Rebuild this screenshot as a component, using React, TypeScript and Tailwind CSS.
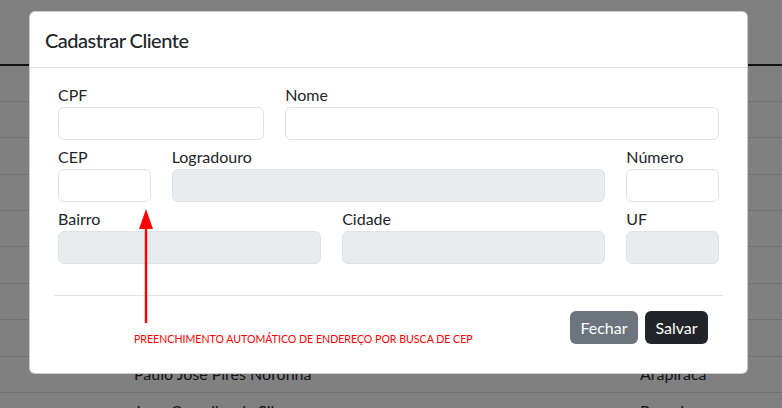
import React from 'react'

// linhas cobertas pelo modal ficam vazias
const rows = [
  { nome: '', cidade: '' },
  { nome: '', cidade: '' },
  { nome: '', cidade: '' },
  { nome: '', cidade: '' },
  { nome: '', cidade: '' },
  { nome: '', cidade: '' },
  { nome: '', cidade: '' },
  { nome: '', cidade: '' },
  { nome: 'Paulo José Pires Noronha', cidade: 'Arapiraca' },
  { nome: 'Joao Carvalho da Silva', cidade: 'Penedo' },
]

function Field({ label, span, disabled }: { label: string; span: string; disabled?: boolean }) {
  return (
    <div className={span}>
      <label className="mb-[2px] block text-base leading-5 text-[#212529]">{label}</label>
      <div
        className={
          'h-[33px] w-full rounded-[6px] border border-[#dee2e6] ' +
          (disabled ? 'bg-[#e9ecef]' : 'bg-white')
        }
      />
    </div>
  )
}

export default function App() {
  return (
    <div className="relative h-[408px] w-[782px] overflow-hidden bg-[#808080] font-['Lato',sans-serif]">
      {/* tabela atrás do modal */}
      <div className="h-[64px]" />
      <div className="h-[1.5px] bg-[#111]" />
      {rows.map((r, i) => (
        <div
          key={i}
          className="flex h-[36.4px] items-center border-b border-[#6f7173] text-base text-[#111315]"
        >
          <div className="w-[640px] pl-[134px]">{r.nome}</div>
          <div>{r.cidade}</div>
        </div>
      ))}

      {/* modal */}
      <div className="absolute left-[29px] top-[11px] w-[719px] rounded-[6px] border border-black/20 bg-white">
        <div className="flex h-[56px] items-center border-b border-[#dee2e6] px-[15px]">
          <h5 className="text-[20px] font-medium tracking-[-0.5px] text-[#212529]">Cadastrar Cliente</h5>
        </div>

        <div className="px-[28px] pt-[17px]">
          <div className="grid grid-cols-12 gap-x-[21px] gap-y-[7px]">
            <Field label="CPF" span="col-span-4" />
            <Field label="Nome" span="col-span-8" />
            <Field label="CEP" span="col-span-2" />
            <Field label="Logradouro" span="col-span-8" disabled />
            <Field label="Número" span="col-span-2" />
            <Field label="Bairro" span="col-span-5" disabled />
            <Field label="Cidade" span="col-span-5" disabled />
            <Field label="UF" span="col-span-2" disabled />
          </div>
        </div>

        <div className="mx-[24px] mt-[31px] h-px bg-[#dee2e6]" />

        <div className="flex justify-end gap-[7px] pb-[29px] pr-[39px] pt-[15px]">
          <button className="h-[33px] w-[68px] rounded-[6px] bg-[#6c757d] text-base text-white">
            Fechar
          </button>
          <button className="h-[33px] w-[63px] rounded-[6px] bg-[#212529] text-base text-white">
            Salvar
          </button>
        </div>
      </div>

      {/* anotação */}
      <svg className="absolute left-[139px] top-[209px]" width="14" height="114" viewBox="0 0 14 114">
        <polygon points="7,0 0,20 14,20" fill="#ff0000" />
        <rect x="5.8" y="19" width="2.4" height="95" fill="#ff0000" />
      </svg>
      <div className="absolute left-[134px] top-[332px] text-[10.6px] leading-[14px] text-[#ff0000]">
        PREENCHIMENTO AUTOMÁTICO DE ENDEREÇO POR BUSCA DE CEP
      </div>
    </div>
  )
}
